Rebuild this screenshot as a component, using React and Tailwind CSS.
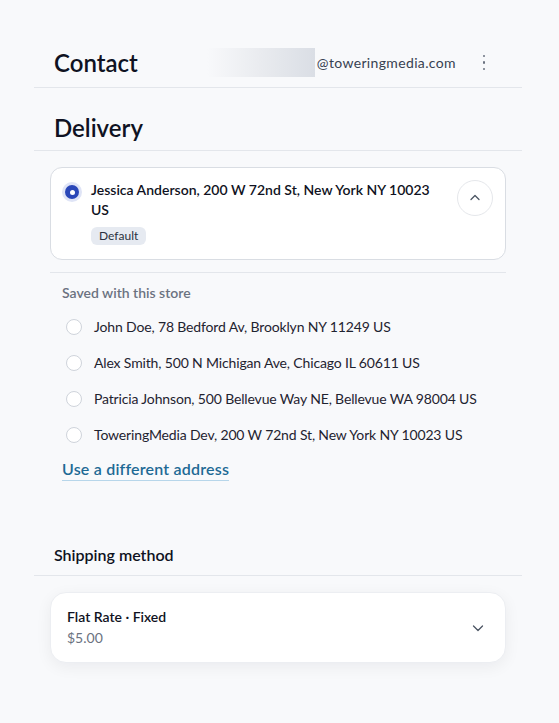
import React from "react";

function Radio({ checked }) {
  if (checked) {
    return (
      <span className="mt-[5px] flex h-[14px] w-[14px] shrink-0 items-center justify-center rounded-full bg-[#2a47b8] ring-[3px] ring-[#dfe4f6]">
        <span className="h-[5px] w-[5px] rounded-full bg-white" />
      </span>
    );
  }
  return <span className="h-[16px] w-[16px] shrink-0 rounded-full border-[1.5px] border-[#cfd4db] bg-white" />;
}

const saved = [
  "John Doe, 78 Bedford Av, Brooklyn NY 11249 US",
  "Alex Smith, 500 N Michigan Ave, Chicago IL 60611 US",
  "Patricia Johnson, 500 Bellevue Way NE, Bellevue WA 98004 US",
  "ToweringMedia Dev, 200 W 72nd St, New York NY 10023 US",
];

export default function App() {
  return (
    <div className="min-h-[723px] w-[559px] bg-[#f8f9fb] font-['Lato','Noto_Sans',sans-serif] text-[#0f1222]">
      <div className="ml-[34px] w-[488px] pt-[38px]">
        {/* Contact */}
        <div className="flex h-[50px] items-center border-b border-[#e3e6eb] pl-[20px] pr-[35px]">
          <h2 className="text-[24px] font-semibold leading-[28px]">Contact</h2>
          <div className="ml-[69px] h-[29px] w-[108px] bg-gradient-to-r from-[#f8f9fb] via-[#e9ebef] to-[#dadee5] blur-[0.5px]" />
          <span className="ml-[2px] text-[14px] tracking-[0.35px] text-[#374151]">@toweringmedia.com</span>
          <div className="ml-auto flex flex-col items-center gap-[4px] pr-[2px]">
            <span className="h-[2.5px] w-[2.5px] rounded-full bg-[#6b7280]" />
            <span className="h-[2.5px] w-[2.5px] rounded-full bg-[#6b7280]" />
            <span className="h-[2.5px] w-[2.5px] rounded-full bg-[#6b7280]" />
          </div>
        </div>

        {/* Delivery */}
        <div className="border-b border-[#e3e6eb] pb-[8px] pl-[20px] pt-[26px]">
          <h2 className="text-[24px] font-semibold leading-[28px]">Delivery</h2>
        </div>

        <div className="mx-[16px] mt-[16px]">
          <div className="flex rounded-[12px] border border-[#d9dde3] bg-white pb-[13px] pl-[14px] pr-[12px] pt-[12px]">
            <Radio checked />
            <div className="ml-[12px] flex-1">
              <p className="text-[14px] font-semibold leading-[20px]">
                Jessica Anderson, 200 W 72nd St, New York NY 10023 US
              </p>
              <span className="mt-[7px] inline-block rounded-[6px] bg-[#e6eaf1] px-[8px] text-[12px] leading-[18px] text-[#2b3140]">
                Default
              </span>
            </div>
            <button className="ml-[12px] flex h-[36px] w-[36px] shrink-0 items-center justify-center rounded-full border border-[#e5e7eb] bg-white">
              <svg width="14" height="14" viewBox="0 0 14 14" fill="none">
                <path d="M3 8.5 7 4.5l4 4" stroke="#4b5563" strokeWidth="1.3" strokeLinecap="round" strokeLinejoin="round" />
              </svg>
            </button>
          </div>

          <div className="mt-[12px] border-t border-[#e3e6eb] pt-[10px]">
            <p className="pl-[12px] text-[14px] font-semibold leading-[20px] text-[#6b7280]">Saved with this store</p>
            <ul className="mt-[6px]">
              {saved.map((a) => (
                <li key={a} className="flex h-[36px] items-center gap-[12px] pl-[16px]">
                  <Radio />
                  <span className="text-[14px] leading-[20px] tracking-[-0.15px] text-[#1f2330]">{a}</span>
                </li>
              ))}
            </ul>
            <a className="ml-[12px] mt-[4px] inline-block border-b border-[#b7d6ea] text-[16px] font-semibold leading-[23px] tracking-[0.2px] text-[#1e6a95]">
              Use a different address
            </a>
          </div>
        </div>

        {/* Shipping method */}
        <div className="mt-[62px] border-b border-[#e3e6eb] pb-[8px] pl-[20px]">
          <h3 className="text-[16px] font-semibold leading-[24px]">Shipping method</h3>
        </div>

        <div className="mx-[16px] mt-[16px] flex items-center rounded-[16px] border border-[#eceef2] bg-white pb-[14px] pl-[16px] pr-[20px] pt-[14px] shadow-[0_4px_16px_rgba(15,23,42,0.06)]">
          <div className="flex-1">
            <p className="text-[14px] font-semibold leading-[20px]">Flat Rate · Fixed</p>
            <p className="mt-[1px] text-[14px] leading-[20px] text-[#6b7280]">$5.00</p>
          </div>
          <svg width="14" height="14" viewBox="0 0 14 14" fill="none">
            <path d="M2.5 5 7 9.5 11.5 5" stroke="#4b5563" strokeWidth="1.3" strokeLinecap="round" strokeLinejoin="round" />
          </svg>
        </div>
      </div>
    </div>
  );
}
